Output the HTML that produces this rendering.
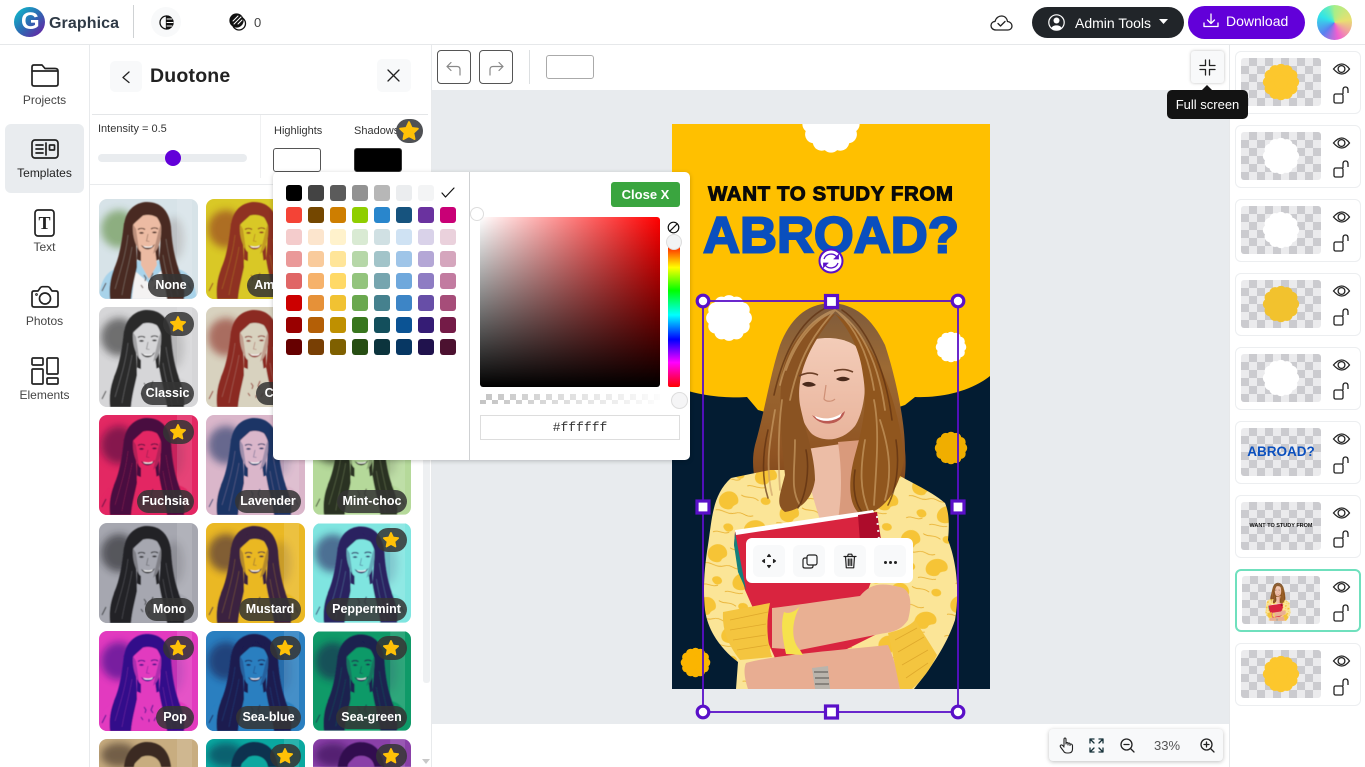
<!DOCTYPE html>
<html lang="en">
<head>
<meta charset="utf-8">
<title>Graphica</title>
<style>
html,body{margin:0;padding:0;width:1365px;height:767px;overflow:hidden;background:#fff;font-family:"Liberation Sans",sans-serif;color:#222}
*{box-sizing:border-box}
#root{position:relative;width:1365px;height:767px;overflow:hidden;background:#fff}
.a{position:absolute}
.l{position:absolute;white-space:nowrap}
svg{display:block;overflow:visible}
.ic{position:absolute;fill:none;stroke:#222;stroke-width:1.6;stroke-linecap:round;stroke-linejoin:round}
.nav{position:absolute;left:0;width:89px;text-align:center;font-size:12px;color:#444}
.t{position:absolute;width:99px;height:100px;border-radius:8px;overflow:hidden}
.t>svg{width:100%;height:100px}
.t.x{height:28px;border-radius:8px 8px 0 0}
.t.x>svg{height:28px}
.t b{position:absolute;right:4px;bottom:2px;height:23px;line-height:23px;border-radius:12px;background:rgba(52,52,52,.86);color:#fff;font-size:12.5px;text-align:center}
.t i{position:absolute;right:4px;top:5px;width:31px;height:24px;border-radius:12px;background:rgba(52,52,52,.86)}
.t i svg{position:absolute;left:6px;top:3px;width:18px;height:18px}
.sw{position:absolute;width:16px;height:16px;border-radius:3px}
.c{position:absolute;left:1235px;width:126px;height:63px;border:1px solid #eceef0;border-radius:6px;background:#fff}
.ck{position:absolute;left:5px;top:6px;width:80px;height:48px;border-radius:3px;background:repeating-conic-gradient(#cbcbcf 0 25%,#ebebed 0 50%) 0 0/16px 16px;overflow:hidden}
.c .e{position:absolute;left:94px;top:7px;width:24px;height:46px;fill:none;stroke:#222;stroke-width:1.3}
.tb{position:absolute;top:545px;width:32px;height:32px;border-radius:6px;background:#f8f9fa}
</style>
</head>
<body>
<div id="root">

<svg width="0" height="0" style="position:absolute">
<defs>
<filter id="bl" x="-30%" y="-30%" width="160%" height="160%"><feGaussianBlur stdDeviation="4"/></filter>
<filter id="sf" x="-5%" y="-5%" width="110%" height="110%"><feGaussianBlur stdDeviation=".45"/></filter>
<clipPath id="cv"><rect x="672" y="124" width="318" height="565"/></clipPath>
<symbol id="p" viewBox="0 0 99 100">
<rect width="99" height="100" style="fill:var(--h)"/>
<ellipse cx="20" cy="30" rx="18" ry="19" filter="url(#bl)" opacity=".6" style="fill:var(--l,var(--d))"/>
<ellipse cx="75" cy="40" rx="10" ry="22" filter="url(#bl)" opacity=".18" style="fill:var(--d)"/>
<rect x="78" y="0" width="15" height="100" fill="#fff" opacity=".13"/>
<g filter="url(#sf)">
<path d="M0 100C1 84 6 74 16 70L34 62H62L84 72C92 76 96 86 98 100Z" style="fill:var(--b,var(--h))"/>
<path d="M36 72L50 84 64 70 69 100H33Z" style="fill:var(--w,var(--b,var(--h)))"/>
<path d="M25 26C27 8 40 3 48 3 60 3 70 10 72 28L60 34H38Z" style="fill:var(--d)"/>
<path d="M25 24C23 42 21 56 15 70 11 80 10 90 11 100H32C33 88 36 78 38 68 38 56 36 40 38 24Z" style="fill:var(--d)"/>
<path d="M72 28C73 46 76 62 82 76 85 84 86 92 85 100H68C66 86 62 74 60 60 62 44 62 34 60 24Z" style="fill:var(--d)"/>
<path d="M38 26H60V60C56 64 42 64 38 60Z" style="fill:var(--d)"/>
<path d="M42 50H56L58 66 50 80 42 66Z" style="fill:var(--s,var(--h))"/>
<path d="M34 25C36 14 60 12 62 25 63 40 60 50 54 55 49 58 44 56 40 51 36 45 33 36 34 25Z" style="fill:var(--s,var(--h))"/>
<path d="M34 25C33 36 36 45 40 51L37 30ZM62 25C63 40 60 50 54 55L60 30Z" opacity=".3" style="fill:var(--d)"/>
<path d="M34 26C38 21 46 16 50 10 42 9 35 14 34 26ZM50 10C56 15 60 20 62 27 64 17 58 10 50 10Z" style="fill:var(--d)"/>
<path d="M39 30.500c2-1.500 5-1.500 7 0M52 30c2-1.500 5-1.500 7 0" fill="none" stroke-width="1.100" style="stroke:var(--d)"/>
<path d="M40 34c1.500-1.300 3.500-1.300 5 0-1.500 1-3.500 1-5 0zM53 33.500c1.500-1.300 3.500-1.300 5 0-1.500 1-3.500 1-5 0z" style="fill:var(--d)"/>
<path d="M49 35l-1.500 7 3 .5" fill="none" stroke-width=".6" opacity=".6" style="stroke:var(--d)"/>
<path d="M42 46C46 49 52 49 56 45 53 52 45 52 42 46Z" style="fill:var(--d)"/>
<path d="M44 46.800C47 48 51 48 54 46.200L53 48C50 49 47 49 45 48Z" fill="#fff" opacity=".95"/>
<path d="M29 36C27 54 22 70 16 90M33 48C31 62 26 78 23 96M67 40C69 56 74 76 79 96M64 56C66 70 70 84 73 98" fill="none" stroke-width=".7" opacity=".3" style="stroke:var(--h)"/>
<path d="M45 76l2 3-1 3M54 74l-2 5 2 3M42 86l2 3M57 86l-2 4M50 88v3M3 92l4-8M92 90l-3-6" fill="none" stroke-width="1.100" opacity=".8" style="stroke:var(--d)"/>
</g>
</symbol>
<symbol id="q" viewBox="0 0 99 28">
<rect width="99" height="28" style="fill:var(--h)"/>
<ellipse cx="20" cy="16" rx="18" ry="12" filter="url(#bl)" opacity=".6" style="fill:var(--d)"/>
<rect x="78" y="0" width="15" height="28" fill="#fff" opacity=".13"/>
<g filter="url(#sf)">
<path d="M25 28C27 8 40 3 48 3 60 3 70 10 72 28Z" style="fill:var(--d)"/>
<path d="M35 28C36 14 60 12 62 28Z" style="fill:var(--h)"/>
<path d="M34 27C38 21 46 16 50 10 42 9 35 14 34 27ZM50 10C56 15 60 20 62 27 64 17 58 10 50 10Z" style="fill:var(--d)"/>
</g>
</symbol>
<symbol id="st" viewBox="-10 -10 20 20"><path d="M0-8L2.400-2.800 8-2.100 3.900 1.700 5 7.300 0 4.500-5 7.300-3.900 1.700-8-2.100-2.400-2.800Z" fill="#ffc107" stroke="#ffc107" stroke-width="1.800" stroke-linejoin="round"/></symbol>
<symbol id="cl" viewBox="-1.100 -1.100 2.200 2.200"><circle r=".82"/><circle cx=".72" r=".33"/><circle cx="-.72" r=".33"/><circle cy=".72" r=".33"/><circle cy="-.72" r=".33"/><circle cx=".62" cy=".38" r=".33"/><circle cx="-.62" cy=".38" r=".33"/><circle cx=".62" cy="-.38" r=".33"/><circle cx="-.62" cy="-.38" r=".33"/><circle cx=".34" cy=".65" r=".33"/><circle cx="-.34" cy=".65" r=".33"/><circle cx=".34" cy="-.65" r=".33"/><circle cx="-.34" cy="-.65" r=".33"/></symbol>
<symbol id="el" viewBox="0 0 24 46"><path d="M3.500 10q8.500-10 16 0-7.500 10-16 0z"/><circle cx="11.500" cy="10" r="3.400"/><rect x="4" y="35" width="9" height="9" rx="1.500"/><path d="M13 35v-4q0-3 2.500-3T18 31v3"/></symbol>
<linearGradient id="hg" x1="0" y1="0" x2="0" y2="1"><stop offset="0" stop-color="#7d5a3c"/><stop offset=".3" stop-color="#9c6a34"/><stop offset=".7" stop-color="#8f5322"/><stop offset="1" stop-color="#6f3c14"/></linearGradient>
<linearGradient id="sk" x1="0" y1="0" x2="0" y2="1"><stop offset="0" stop-color="#f3ccb8"/><stop offset="1" stop-color="#e9b49c"/></linearGradient>
<pattern id="jk" width="62" height="54" patternUnits="userSpaceOnUse" patternTransform="rotate(12)">
<rect width="62" height="54" fill="#fbe597"/>
<path d="M4 8c6-6 14-3 16 3s-3 5-4 9-10 4-13 0-2-9 1-12zM36 30c7-5 16-2 17 4s-6 4-7 8-10 5-13 1-1-10 3-13zM44 4c4-2 8 0 8 3s-5 5-8 3-2-5 0-6zM12 38c4-3 8-1 9 2s-4 6-7 4-4-4-2-6z" fill="#f6c436"/>
<path d="M0 26c6-3 12 3 20-1s10 3 18-1M22 6c6 3 10-2 18 2M2 48c6-4 10 1 16-3M26 50c5-3 10 1 18-2" fill="none" stroke="#e8ae2c" stroke-width=".8"/>
</pattern>
<symbol id="w" viewBox="700 296 262 396">
<path d="M831 303C805 304 790 320 780 345 770 375 765 410 755 445 750 465 755 490 765 505L885 520C900 510 908 480 905 450 905 420 895 375 885 345 872 318 855 304 831 303Z" fill="url(#hg)"/>
<path d="M731 478C712 495 712 520 708 545 704 570 703 590 705 610 708 632 722 650 738 662L736 689H914C925 675 945 650 955 620 960 590 956 560 948 540 950 520 948 510 945 503 930 490 905 480 890 470L770 470Z" fill="url(#jk)"/>
<path d="M800 450C806 470 812 495 820 520L870 520C872 490 872 465 868 440Z" fill="#ecbda6"/>
<path d="M838 442C842 470 842 495 838 520L862 518C868 490 868 465 862 440Z" fill="#d99a7c"/>
<path d="M794 352C803 334 852 332 862 354 868 380 865 410 855 426 843 441 824 443 812 434 798 420 789 380 794 352Z" fill="url(#sk)"/>
<path d="M835 314C812 318 788 340 782 375 778 410 782 445 785 475 780 495 775 505 785 512 800 510 812 500 815 480 815 455 805 430 800 405 796 380 805 350 835 314Z" fill="#8a5322"/>
<path d="M835 314C850 330 860 350 863 375 868 405 862 430 855 455 848 480 848 505 860 514 880 515 898 495 904 460 900 410 880 340 835 314Z" fill="#90561e"/>
<g fill="none" stroke-linecap="round">
<path d="M835 310C810 318 790 345 780 385M835 310C820 328 800 350 790 400M832 312C812 322 796 342 786 370M775 410C770 440 765 465 772 495M782 400C778 430 778 460 780 490M795 440C795 470 790 490 800 505M835 310C860 325 878 360 885 410M838 312C855 328 868 352 874 390M880 420C890 450 892 475 885 500M865 440C860 470 860 490 868 510M874 400C880 430 876 470 874 505" stroke="#cda068" stroke-width="1.800" opacity=".65"/>
<path d="M830 306C805 316 785 345 774 395M842 310C865 325 885 365 892 420M768 430C762 455 762 480 768 498M806 450C810 470 806 495 798 508M855 470C852 490 856 505 862 512M896 440C900 465 896 490 888 505" stroke="#5c2f10" stroke-width="1.600" opacity=".7"/>
</g>
<path d="M802 384c4-3 10-3 14 1-4 2-10 3-14-1zM836 379c4-3 10-3 14 0-4 3-10 3-14 0z" fill="#4a2a1c"/>
<path d="M799 376c6-3 13-4 19-1M834 371c6-2 13-2 19 1" fill="none" stroke="#6d4028" stroke-width="1.600"/>
<path d="M812 415C822 422 835 420 845 411 842 426 820 428 812 415Z" fill="#bb5a52"/>
<path d="M815 416C824 420 834 419 842 413L840 417C832 422 822 422 816 418Z" fill="#fff"/>
<path d="M826 385l-2 14c2 3 8 3 11 0" fill="none" stroke="#cf9076" stroke-width="1.200"/>
<path d="M735 532L875 512 881 555 868 590 885 630 805 670 775 658 745 590 734 545Z" fill="#d9243f"/>
<path d="M735 532L746 590 738 572 734 545Z" fill="#14807c"/>
<path d="M735 530L873 510 875 514 736 535Z" fill="#fff"/>
<path d="M858 515L877 512 881 540 860 542Z" fill="#ad0c2b"/>
<path d="M877 516l2 24" stroke="#eee" stroke-width="2" stroke-dasharray="2 5"/>
<path d="M772 608C790 606 830 600 860 596 870 584 880 582 900 587 912 590 912 605 908 620 900 632 890 632 880 634L800 650 772 648Z" fill="#e9b093"/>
<path d="M746 663C775 655 840 650 888 645 895 660 898 675 900 689H748C745 680 743 670 746 663Z" fill="#e8ad92"/>
<path d="M723 612L770 603C765 625 768 645 772 657L740 660C728 645 722 630 723 612Z" fill="#f4c53f"/>
<path d="M888 633C900 630 910 626 915 620L937 655C930 670 922 680 912 689H900C896 670 892 650 888 633Z" fill="#f4c53f"/>
<path d="M730 620l38-8M730 630l36-6M733 640l33-5M737 650l31-5M895 640l22-12M898 652l26-15M902 665l26-15M906 678l22-15" stroke="#dfa92c" stroke-width=".8"/>
<path d="M784 612C790 615 797 610 800 606 792 620 790 640 800 650L803 655 786 654C783 640 780 625 784 612Z" fill="#f6e24d"/>
<path d="M812 668L828 666 830 689H815Z" fill="#b9b4ac"/>
<path d="M814 672h14M815 678h14M815 684h14" stroke="#55524e" stroke-width="1"/>
</symbol>
</defs>
</svg>

<!-- top header -->
<div class="a" style="left:0;top:44px;width:1365px;height:1px;background:#e6e8ea"></div>
<div class="a" style="left:14px;top:7px;width:31px;height:30px;border-radius:50%;background:linear-gradient(135deg,#12b3c9 10%,#2c6bb3 50%,#6a1fa3 95%)"></div>
<div class="l" style="left:21px;top:7px;font-size:24px;line-height:30px;font-weight:bold;color:#fff">G</div>
<div class="l" style="left:49px;top:14px;font-size:16px;line-height:20px;font-weight:bold;color:#2f3a46;letter-spacing:.1px">Graphica</div>
<div class="a" style="left:133px;top:5px;width:1px;height:33px;background:#cfd2d4"></div>
<div class="a" style="left:151px;top:7px;width:30px;height:30px;border-radius:50%;background:#f8f9fa"></div>
<svg class="ic" style="left:159px;top:15px;stroke:#111;stroke-width:1.300" width="15" height="15" viewBox="0 0 15 15"><circle cx="7.500" cy="7.500" r="6.500"/><path d="M7.500 1a6.500 6.500 0 0 1 0 13z" fill="#111"/><path d="M8 4h5M8 7.500h6M8 11h5" stroke="#fff" stroke-width="1"/></svg>
<svg class="ic" style="left:229px;top:13px;stroke:#111;stroke-width:1.300" width="18" height="18" viewBox="0 0 18 18"><circle cx="10" cy="10.500" r="6.500"/><circle cx="7.500" cy="7.500" r="6.500" fill="#111"/><path d="M4 8l5-5M5 11l7-7M9 11l4-4" stroke="#fff" stroke-width="1"/></svg>
<div class="l" style="left:254px;top:15px;font-size:13px;line-height:16px;color:#444">0</div>

<svg class="ic" style="left:990px;top:14px;stroke:#222;stroke-width:1.300" width="23" height="18" viewBox="0 0 23 18"><path d="M6 16C2.500 16 1 13.500 1 11.500 1 9 3 7.500 5 7.500 6 3.500 9 2 11.500 2 15 2 17 4.500 17.500 7.500 20 7.800 22 9.500 22 12 22 14.500 20 16 18 16Z"/><path d="M8 9.500l2.500 2.500 4.500-4.500"/></svg>
<div class="a" style="left:1032px;top:7px;width:152px;height:31px;border-radius:16px;background:#212529"></div>
<svg class="a" style="left:1048px;top:14px" width="17" height="17" viewBox="0 0 17 17"><circle cx="8.500" cy="8.500" r="7.700" fill="none" stroke="#fff" stroke-width="1.200"/><circle cx="8.500" cy="6.500" r="3" fill="#fff"/><path d="M3.500 14C4.500 10.500 12.500 10.500 13.500 14 11 16.500 6 16.500 3.500 14Z" fill="#fff"/></svg>
<div class="l" style="left:1075px;top:15px;font-size:14px;line-height:16px;color:#fff">Admin Tools</div>
<svg class="a" style="left:1159px;top:19px" width="9" height="5" viewBox="0 0 9 5"><path d="M0 0h9L4.500 5z" fill="#fff"/></svg>
<div class="a" style="left:1188px;top:6px;width:117px;height:33px;border-radius:17px;background:#6200d9"></div>
<svg class="ic" style="left:1203px;top:13px;stroke:#fff;stroke-width:1.300" width="16" height="15" viewBox="0 0 16 15"><path d="M8 1v9M4.500 7L8 10.500 11.500 7M1 10v3.500h14V10"/></svg>
<div class="l" style="left:1226px;top:13px;font-size:14px;line-height:16px;color:#fff">Download</div>
<div class="a" style="left:1317px;top:5px;width:35px;height:35px;border-radius:50%;background:conic-gradient(from 0deg,#a8ee88,#e8e070 80deg,#f0a0a0 125deg,#f060d0 165deg,#5a80f0 225deg,#30e4e8 295deg,#60ecc0 335deg,#a8ee88)"></div>

<!-- left sidebar -->
<div class="a" style="left:89px;top:45px;width:1px;height:722px;background:#e8eaec"></div>
<div class="a" style="left:5px;top:124px;width:79px;height:69px;border-radius:6px;background:#e9ecef"></div>
<svg class="ic" style="left:31px;top:64px;stroke-width:1.700" width="28" height="23" viewBox="0 0 28 23"><path d="M1 3q0-2 2-2h8l3 3.500h10q3 0 3 2.500v13q0 2-2 2H3q-2 0-2-2z"/><path d="M1 7h25"/></svg>
<div class="nav" style="top:93px">Projects</div>
<svg class="ic" style="left:31px;top:139px;stroke-width:1.700" width="28" height="20" viewBox="0 0 28 20"><rect x="1" y="1" width="26" height="18" rx="3"/><path d="M5 6h7M5 10h7M5 14h7M15 4v12"/><rect x="18.500" y="6" width="5" height="5" rx=".5"/></svg>
<div class="nav" style="top:166px;color:#222">Templates</div>
<svg class="ic" style="left:34px;top:209px;stroke-width:1.700" width="21" height="28" viewBox="0 0 21 28"><rect x="1" y="1" width="19" height="26" rx="3"/></svg>
<div class="l" style="left:34px;top:209px;width:21px;height:28px;text-align:center;font:bold 18px/28px 'Liberation Serif',serif;color:#222">T</div>
<div class="nav" style="top:240px">Text</div>
<svg class="ic" style="left:31px;top:286px;stroke-width:1.700" width="28" height="22" viewBox="0 0 28 22"><path d="M3 21q-2 0-2-2V7q0-2 2-2h4l2.500-3.500q1-.8 2-.8h5q1 0 2 .8L21 5h4q2 0 2 2v12q0 2-2 2z"/><circle cx="14" cy="12.500" r="5.500"/><circle cx="5.500" cy="8.500" r=".5"/></svg>
<div class="nav" style="top:314px">Photos</div>
<svg class="ic" style="left:31px;top:357px;stroke-width:1.700" width="28" height="28" viewBox="0 0 28 28"><rect x="1" y="1" width="11" height="7" rx="1"/><rect x="1" y="12" width="11" height="15" rx="1"/><rect x="16" y="1" width="11" height="16" rx="1"/><rect x="16" y="21" width="11" height="6" rx="1"/></svg>
<div class="nav" style="top:388px">Elements</div>

<!-- panel -->
<div class="a" style="left:431px;top:45px;width:1px;height:722px;background:#e8eaec"></div>
<div class="a" style="left:110px;top:61px;width:32px;height:31px;border-radius:5px;background:#f8f9fa"></div>
<svg class="ic" style="left:122px;top:71px;stroke-width:1.300" width="8" height="12" viewBox="0 0 8 12"><path d="M7 1L1 6.500 7 11.500"/></svg>
<div class="l" style="left:150px;top:65px;font-size:19.500px;line-height:23px;font-weight:bold;color:#222;letter-spacing:.2px">Duotone</div>
<div class="a" style="left:377px;top:59px;width:34px;height:33px;border-radius:5px;background:#f8f9fa"></div>
<svg class="ic" style="left:387px;top:69px;stroke-width:1.300;stroke:#222" width="13" height="13" viewBox="0 0 13 13"><path d="M1 1l11 11M12 1L1 12"/></svg>
<div class="a" style="left:92px;top:114px;width:336px;height:1px;background:#e4e6e8"></div>
<div class="a" style="left:90px;top:184px;width:341px;height:1px;background:#e9ebed"></div>
<div class="a" style="left:260px;top:115px;width:1px;height:63px;background:#f0f1f2"></div>
<div class="l" style="left:98px;top:122px;font-size:11px;line-height:14px;color:#333">Intensity = 0.5</div>
<div class="a" style="left:98px;top:154px;width:149px;height:8px;border-radius:4px;background:#e9ecef"></div>
<div class="a" style="left:165px;top:150px;width:16px;height:16px;border-radius:50%;background:#6200d9"></div>
<div class="l" style="left:274px;top:124px;font-size:11px;line-height:14px;color:#333">Highlights</div>
<div class="l" style="left:354px;top:124px;font-size:11px;line-height:14px;color:#333">Shadows</div>
<div class="a" style="left:273px;top:148px;width:48px;height:24px;border:1px solid #555;border-radius:3px;background:#fff"></div>
<div class="a" style="left:354px;top:148px;width:48px;height:24px;border:1px solid #333;border-radius:3px;background:#000"></div>
<div class="a" style="left:396px;top:119px;width:27px;height:24px;border-radius:12px;background:#4f5154"></div>
<svg class="a" style="left:398px;top:120px" width="22" height="22"><use href="#st"/></svg>

<div class="t" style="left:99px;top:199px;--h:#d7e3e8;--d:#4a2b20;--s:#ecbba3;--b:#a8d3ea;--w:#f4f2f2;--l:#5c8a3b"><svg><use href="#p"/></svg><b style="width:46px">None</b></div>
<div class="t" style="left:206px;top:199px;--h:#d9c826;--d:#8f3322"><svg><use href="#p"/></svg><b style="width:54px">Amber</b></div>
<div class="t" style="left:99px;top:307px;--h:#d6d6d8;--d:#2a2a2c"><svg><use href="#p"/></svg><i><svg><use href="#st"/></svg></i><b style="width:53px">Classic</b></div>
<div class="t" style="left:206px;top:307px;--h:#d8d2bf;--d:#8b2a22"><svg><use href="#p"/></svg><b style="width:45px">Cool</b></div>
<div class="t" style="left:99px;top:415px;--h:#e32863;--d:#4a1040"><svg><use href="#p"/></svg><i><svg><use href="#st"/></svg></i><b style="width:57px">Fuchsia</b></div>
<div class="t" style="left:206px;top:415px;--h:#dab6ca;--d:#1c3566"><svg><use href="#p"/></svg><b style="width:66px">Lavender</b></div>
<div class="t" style="left:313px;top:415px;width:98px;--h:#b5d99a;--d:#2a3020"><svg><use href="#p"/></svg><b style="width:70px">Mint-choc</b></div>
<div class="t" style="left:99px;top:523px;--h:#a6a7b0;--d:#232326"><svg><use href="#p"/></svg><b style="width:49px">Mono</b></div>
<div class="t" style="left:206px;top:523px;--h:#eab824;--d:#3a2040"><svg><use href="#p"/></svg><b style="width:62px">Mustard</b></div>
<div class="t" style="left:313px;top:523px;width:98px;--h:#7fe5e0;--d:#2a2060"><svg><use href="#p"/></svg><i><svg><use href="#st"/></svg></i><b style="width:81px">Peppermint</b></div>
<div class="t" style="left:99px;top:631px;--h:#e23abf;--d:#30108a"><svg><use href="#p"/></svg><i><svg><use href="#st"/></svg></i><b style="width:38px">Pop</b></div>
<div class="t" style="left:206px;top:631px;--h:#2a7fc0;--d:#1a1a50"><svg><use href="#p"/></svg><i><svg><use href="#st"/></svg></i><b style="width:65px">Sea-blue</b></div>
<div class="t" style="left:313px;top:631px;width:98px;--h:#0f9a68;--d:#1a2050"><svg><use href="#p"/></svg><i><svg><use href="#st"/></svg></i><b style="width:71px">Sea-green</b></div>
<div class="t x" style="left:99px;top:739px;--h:#c8ad80;--d:#3a2a20"><svg><use href="#q"/></svg></div>
<div class="t x" style="left:206px;top:739px;--h:#0aa8a0;--d:#103050"><svg><use href="#q"/></svg><i><svg><use href="#st"/></svg></i></div>
<div class="t x" style="left:313px;top:739px;width:98px;--h:#8a40a8;--d:#301050"><svg><use href="#q"/></svg><i><svg><use href="#st"/></svg></i></div>
<div class="a" style="left:423px;top:185px;width:7px;height:498px;border-radius:3px;background:#eef0f2"></div>
<svg class="a" style="left:422px;top:759px" width="9" height="6"><path d="M0 0h8L4 5z" fill="#c8c8c8"/></svg>

<!-- canvas -->
<div class="a" style="left:432px;top:90px;width:797px;height:634px;background:#e8ebee"></div>
<div class="a" style="left:1229px;top:45px;width:1px;height:722px;background:#e6e8ea"></div>

<svg class="a" style="left:0;top:0" width="1365" height="767" viewBox="0 0 1365 767">
<rect x="672" y="124" width="318" height="565" fill="#031c32"/>
<path d="M672 124H990V376C970 392 940 398 915 397L905 405 831 430 758 410 747 397C735 398 700 398 672 385Z" fill="#ffc000"/>
<g clip-path="url(#cv)"><svg x="801" y="94" width="60" height="60" fill="#fff"><use href="#cl" width="60" height="60"/></svg></g>
<text x="708" y="200.500" font-family="Liberation Sans" font-weight="bold" font-size="20.500" textLength="245" fill="#0a0a0a" stroke="#0a0a0a" stroke-width=".9">WANT TO STUDY FROM</text>
<text x="703" y="252.500" font-family="Liberation Sans" font-weight="bold" font-size="51" textLength="256" lengthAdjust="spacingAndGlyphs" fill="#0a4fbe" stroke="#0a4fbe" stroke-width="2">ABROAD?</text>
<svg x="705" y="294" width="48" height="48" fill="#fff"><use href="#cl" width="48" height="48"/></svg>
<svg x="935" y="331" width="32" height="32" fill="#fff"><use href="#cl" width="32" height="32"/></svg>
<svg x="934" y="431" width="34" height="34" fill="#f0ae00"><use href="#cl" width="34" height="34"/></svg>
<svg x="680" y="647" width="31" height="31" fill="#fbb500"><use href="#cl" width="31" height="31"/></svg>
<use href="#w" x="700" y="296" width="262" height="396"/>
<rect x="703" y="301" width="255" height="411" fill="none" stroke="#5a10c8" stroke-width="1.800"/>
<g fill="#fff" stroke="#5a10c8" stroke-width="3.200">
<circle cx="703" cy="301" r="5.800"/><circle cx="958" cy="301" r="5.800"/><circle cx="703" cy="712" r="5.800"/><circle cx="958" cy="712" r="5.800"/>
<rect x="825.500" y="295.500" width="12" height="12"/><rect x="825.500" y="706" width="12" height="12"/><rect x="697" y="501" width="12" height="12"/><rect x="952" y="501" width="12" height="12"/>
</g>
<circle cx="831" cy="261" r="11.500" fill="#fff" stroke="#5a10c8" stroke-width="2"/>
<path d="M824 259a7.500 7.500 0 0 1 13-2M838 263a7.500 7.500 0 0 1-13 2" fill="none" stroke="#5a10c8" stroke-width="1.300"/>
<path d="M838.500 254v5h-5M823.500 268v-5h5" fill="#5a10c8" stroke="#5a10c8" stroke-width=".8"/>
</svg>

<!-- object toolbar -->
<div class="a" style="left:746px;top:538px;width:167px;height:45px;border-radius:6px;background:#fff"></div>
<div class="tb" style="left:753px"></div><div class="tb" style="left:793px"></div><div class="tb" style="left:834px"></div><div class="tb" style="left:874px"></div>
<svg class="ic" style="left:761px;top:553px;stroke-width:1.100" width="16" height="16" viewBox="0 0 16 16"><path d="M8 2v12M2 8h12"/><path d="M6.500 3.500L8 1.500 9.500 3.500zM6.500 12.500L8 14.500 9.500 12.500zM3.500 6.500L1.500 8 3.500 9.500zM12.500 6.500L14.500 8 12.500 9.500z" fill="#222"/><path d="M8 5v6M5 8h6" stroke="#fff" stroke-width="2"/></svg>
<svg class="ic" style="left:802px;top:554px;stroke-width:1.200" width="16" height="15" viewBox="0 0 16 15"><rect x="5" y="1" width="10" height="10" rx="2"/><path d="M5 4H3Q1 4 1 6v6.500Q1 14 3 14h6q2 0 2-2v-1"/></svg>
<svg class="ic" style="left:843px;top:553px;stroke-width:1.200" width="14" height="16" viewBox="0 0 14 16"><path d="M1 3.500h12M4.500 3.500l.8-2.300h3.400l.8 2.300M2.500 3.500l.8 11.300h7.400l.8-11.300M5.300 6v6.500M7 6v6.500M8.700 6v6.500"/></svg>
<div class="l" style="left:884px;top:561px;width:3px;height:3px;border-radius:50%;background:#222"></div>
<div class="l" style="left:889px;top:561px;width:3px;height:3px;border-radius:50%;background:#222"></div>
<div class="l" style="left:894px;top:561px;width:3px;height:3px;border-radius:50%;background:#222"></div>

<!-- canvas top toolbar -->
<div class="a" style="left:437px;top:50px;width:34px;height:34px;border:1px solid #555;border-radius:4px;background:#fff"></div>
<svg class="ic" style="left:446px;top:60px;stroke:#888;stroke-width:1.200" width="16" height="16" viewBox="0 0 16 16"><path d="M1 6.500L5 2.500M1 6.500l4 4M1 6.500h10q3 0 3 3V15"/></svg>
<div class="a" style="left:479px;top:50px;width:34px;height:34px;border:1px solid #555;border-radius:4px;background:#fff"></div>
<svg class="ic" style="left:488px;top:60px;stroke:#888;stroke-width:1.200" width="16" height="16" viewBox="0 0 16 16"><path d="M15 6.500L11 2.500M15 6.500l-4 4M15 6.500H5q-3 0-3 3V15"/></svg>
<div class="a" style="left:529px;top:50px;width:1px;height:34px;background:#dcdfe1"></div>
<div class="a" style="left:546px;top:55px;width:48px;height:24px;border:1px solid #aaa;border-radius:3px;background:#fff"></div>
<div class="a" style="left:1191px;top:51px;width:33px;height:32px;border-radius:3px;background:#f8f9fa;box-shadow:0 0 3px rgba(0,0,0,.25)"></div>
<svg class="ic" style="left:1199px;top:59px;stroke-width:1.300" width="17" height="17" viewBox="0 0 17 17"><path d="M6.500 1v5.500H1M10.500 1v5.500H16M6.500 16v-5.500H1M10.500 16v-5.500H16"/></svg>

<!-- bottom zoom bar -->
<div class="a" style="left:1049px;top:729px;width:174px;height:32px;border-radius:4px;background:#f8f9fa;box-shadow:0 1px 4px rgba(0,0,0,.25)"></div>
<svg class="ic" style="left:1059px;top:737px;stroke-width:1.100" width="15" height="17" viewBox="0 0 15 17"><path d="M5 9V2.500Q5 1 6 1t1 1.500V7M7 7q0-1.500 1-1.500T9 7v1M9 7q0-1 1-1t1 1.500V8.500M11 8q0-1 1-1t1.500 1.500V12q0 4-4 4H8Q5.500 16 4.500 14L1.500 10q-.8-1.500.5-2T5 10"/></svg>
<svg class="ic" style="left:1089px;top:738px;stroke:#17323a;stroke-width:1.300" width="15" height="15" viewBox="0 0 15 15"><path d="M1 5V1h4M1 1l4 4M14 5V1h-4M14 1l-4 4M1 10v4h4M1 14l4-4M14 10v4h-4M14 14l-4-4"/></svg>
<svg class="ic" style="left:1120px;top:738px;stroke-width:1.300" width="15" height="15" viewBox="0 0 15 15"><circle cx="6.500" cy="6.500" r="5.500"/><path d="M10.500 10.500L14 14M4 6.500h5"/></svg>
<div class="l" style="left:1146px;top:738px;width:42px;text-align:center;font-size:13px;line-height:16px;color:#555">33%</div>
<svg class="ic" style="left:1200px;top:738px;stroke-width:1.300" width="15" height="15" viewBox="0 0 15 15"><circle cx="6.500" cy="6.500" r="5.500"/><path d="M10.500 10.500L14 14M4 6.500h5M6.500 4v5"/></svg>

<!-- right layer cards -->
<div class="c" style="top:51px"><div class="ck"><svg style="position:absolute;left:21px;top:5px" width="38" height="38" fill="#fcc72d"><use href="#cl" width="38" height="38"/></svg></div><svg class="e"><use href="#el" width="24" height="46"/></svg></div>
<div class="c" style="top:125px"><div class="ck"><svg style="position:absolute;left:21px;top:5px" width="38" height="38" fill="#fff"><use href="#cl" width="38" height="38"/></svg></div><svg class="e"><use href="#el" width="24" height="46"/></svg></div>
<div class="c" style="top:199px"><div class="ck"><svg style="position:absolute;left:21px;top:5px" width="38" height="38" fill="#fff"><use href="#cl" width="38" height="38"/></svg></div><svg class="e"><use href="#el" width="24" height="46"/></svg></div>
<div class="c" style="top:273px"><div class="ck"><svg style="position:absolute;left:21px;top:5px" width="38" height="38" fill="#f2c22e"><use href="#cl" width="38" height="38"/></svg></div><svg class="e"><use href="#el" width="24" height="46"/></svg></div>
<div class="c" style="top:347px"><div class="ck"><svg style="position:absolute;left:21px;top:5px" width="38" height="38" fill="#fff"><use href="#cl" width="38" height="38"/></svg></div><svg class="e"><use href="#el" width="24" height="46"/></svg></div>
<div class="c" style="top:421px"><div class="ck"><div class="l" style="left:0;top:16px;width:80px;text-align:center;font-size:13.500px;line-height:16px;font-weight:bold;color:#0a4fbe">ABROAD?</div></div><svg class="e"><use href="#el" width="24" height="46"/></svg></div>
<div class="c" style="top:495px"><div class="ck"><div class="l" style="left:0;top:19px;width:80px;text-align:center;font-size:5.500px;line-height:10px;font-weight:bold;color:#111">WANT TO STUDY FROM</div></div><svg class="e"><use href="#el" width="24" height="46"/></svg></div>
<div class="c" style="top:569px;border:2px solid #6fe0bd"><div class="ck" style="left:5px;top:5px;width:78px"><svg style="position:absolute;left:23px;top:6px" width="26" height="39"><use href="#w" width="26" height="39"/></svg></div><svg class="e" style="left:93px;top:6px"><use href="#el" width="24" height="46"/></svg></div>
<div class="c" style="top:643px"><div class="ck"><svg style="position:absolute;left:21px;top:5px" width="38" height="38" fill="#fcc72d"><use href="#cl" width="38" height="38"/></svg></div><svg class="e"><use href="#el" width="24" height="46"/></svg></div>

<!-- tooltip -->
<div class="a" style="left:1167px;top:90px;width:81px;height:29px;border-radius:5px;background:#131313"></div>
<svg class="a" style="left:1202px;top:85px" width="10" height="5"><path d="M0 5L5 0 10 5z" fill="#131313"/></svg>
<div class="l" style="left:1167px;top:97px;width:81px;text-align:center;font-size:13px;line-height:16px;color:#fff">Full screen</div>

<!-- colour picker -->
<div class="a" style="left:273px;top:172px;width:417px;height:288px;border-radius:5px;background:#fff;box-shadow:0 1px 5px rgba(0,0,0,.22)">
<div class="a" style="left:196px;top:0;width:1px;height:288px;background:#cfd1d3"></div>

<div class="sw" style="left:13px;top:13px;background:#000"></div><div class="sw" style="left:35px;top:13px;background:#434343"></div><div class="sw" style="left:57px;top:13px;background:#5b5b5b"></div><div class="sw" style="left:79px;top:13px;background:#929292"></div><div class="sw" style="left:101px;top:13px;background:#b7b7b7"></div><div class="sw" style="left:123px;top:13px;background:#ebedef"></div><div class="sw" style="left:145px;top:13px;background:#f3f4f5"></div>
<svg class="ic" style="left:168px;top:15px;stroke:#111;stroke-width:1.200" width="14" height="11" viewBox="0 0 14 11"><path d="M1 6l3.500 4L13 1"/></svg>

<div class="sw" style="left:13px;top:35px;background:#f44336"></div><div class="sw" style="left:35px;top:35px;background:#744700"></div><div class="sw" style="left:57px;top:35px;background:#ce7e00"></div><div class="sw" style="left:79px;top:35px;background:#8fce00"></div><div class="sw" style="left:101px;top:35px;background:#2986cc"></div><div class="sw" style="left:123px;top:35px;background:#16537e"></div><div class="sw" style="left:145px;top:35px;background:#6a329f"></div><div class="sw" style="left:167px;top:35px;background:#c90076"></div>

<div class="sw" style="left:13px;top:57px;background:#f4cccc"></div><div class="sw" style="left:35px;top:57px;background:#fce5cd"></div><div class="sw" style="left:57px;top:57px;background:#fff2cc"></div><div class="sw" style="left:79px;top:57px;background:#d9ead3"></div><div class="sw" style="left:101px;top:57px;background:#d0e0e3"></div><div class="sw" style="left:123px;top:57px;background:#cfe2f3"></div><div class="sw" style="left:145px;top:57px;background:#d9d2e9"></div><div class="sw" style="left:167px;top:57px;background:#ead1dc"></div>

<div class="sw" style="left:13px;top:79px;background:#ea9999"></div><div class="sw" style="left:35px;top:79px;background:#f9cb9c"></div><div class="sw" style="left:57px;top:79px;background:#ffe599"></div><div class="sw" style="left:79px;top:79px;background:#b6d7a8"></div><div class="sw" style="left:101px;top:79px;background:#a2c4c9"></div><div class="sw" style="left:123px;top:79px;background:#9fc5e8"></div><div class="sw" style="left:145px;top:79px;background:#b4a7d6"></div><div class="sw" style="left:167px;top:79px;background:#d5a6bd"></div>

<div class="sw" style="left:13px;top:101px;background:#e06666"></div><div class="sw" style="left:35px;top:101px;background:#f6b26b"></div><div class="sw" style="left:57px;top:101px;background:#ffd966"></div><div class="sw" style="left:79px;top:101px;background:#93c47d"></div><div class="sw" style="left:101px;top:101px;background:#76a5af"></div><div class="sw" style="left:123px;top:101px;background:#6fa8dc"></div><div class="sw" style="left:145px;top:101px;background:#8e7cc3"></div><div class="sw" style="left:167px;top:101px;background:#c27ba0"></div>

<div class="sw" style="left:13px;top:123px;background:#cc0000"></div><div class="sw" style="left:35px;top:123px;background:#e69138"></div><div class="sw" style="left:57px;top:123px;background:#f1c232"></div><div class="sw" style="left:79px;top:123px;background:#6aa84f"></div><div class="sw" style="left:101px;top:123px;background:#45818e"></div><div class="sw" style="left:123px;top:123px;background:#3d85c6"></div><div class="sw" style="left:145px;top:123px;background:#674ea7"></div><div class="sw" style="left:167px;top:123px;background:#a64d79"></div>

<div class="sw" style="left:13px;top:145px;background:#990000"></div><div class="sw" style="left:35px;top:145px;background:#b45f06"></div><div class="sw" style="left:57px;top:145px;background:#bf9000"></div><div class="sw" style="left:79px;top:145px;background:#38761d"></div><div class="sw" style="left:101px;top:145px;background:#134f5c"></div><div class="sw" style="left:123px;top:145px;background:#0b5394"></div><div class="sw" style="left:145px;top:145px;background:#351c75"></div><div class="sw" style="left:167px;top:145px;background:#741b47"></div>

<div class="sw" style="left:13px;top:167px;background:#660000"></div><div class="sw" style="left:35px;top:167px;background:#783f04"></div><div class="sw" style="left:57px;top:167px;background:#7f6000"></div><div class="sw" style="left:79px;top:167px;background:#274e13"></div><div class="sw" style="left:101px;top:167px;background:#0c343d"></div><div class="sw" style="left:123px;top:167px;background:#073763"></div><div class="sw" style="left:145px;top:167px;background:#20124d"></div><div class="sw" style="left:167px;top:167px;background:#4c1130"></div>

<div class="a" style="left:338px;top:10px;width:69px;height:25px;border-radius:3px;background:#3aa53f;color:#fff;font-size:13px;line-height:25px;font-weight:bold;text-align:center">Close X</div>
<div class="a" style="left:207px;top:45px;width:180px;height:170px;border-radius:3px;background:linear-gradient(to top,#000,rgba(0,0,0,0)),linear-gradient(to right,#fff,#f00)"></div>
<div class="a" style="left:197px;top:35px;width:14px;height:14px;border-radius:50%;background:#fff;border:1px solid #ddd"></div>
<svg class="ic" style="left:394px;top:49px;stroke:#111;stroke-width:1.200" width="13" height="13" viewBox="0 0 13 13"><circle cx="6.500" cy="6.500" r="5.300"/><path d="M2.800 10.200l7.400-7.400"/></svg>
<div class="a" style="left:395px;top:71px;width:12px;height:144px;border-radius:2px;background:linear-gradient(to bottom,#f00,#ff0 17%,#0f0 33%,#0ff 50%,#00f 67%,#f0f 83%,#f00)"></div>
<div class="a" style="left:393px;top:62px;width:16px;height:16px;border-radius:50%;background:#f2f3f4;border:1px solid #ddd"></div>
<div class="a" style="left:207px;top:222px;width:180px;height:10px;background:repeating-conic-gradient(#c4c4c4 0 25%,#fff 0 50%) 0 0/12px 12px;-webkit-mask-image:linear-gradient(to right,#000,rgba(0,0,0,.05));mask-image:linear-gradient(to right,#000,rgba(0,0,0,.05))"></div>
<div class="a" style="left:398px;top:220px;width:17px;height:17px;border-radius:50%;background:#f5f5f6;border:1px solid #ddd"></div>
<div class="a" style="left:207px;top:243px;width:200px;height:25px;border:1px solid #ddd;text-align:center;font:13px/23px 'Liberation Mono',monospace;color:#333">#ffffff</div>
</div>

</div>
</body>
</html>
